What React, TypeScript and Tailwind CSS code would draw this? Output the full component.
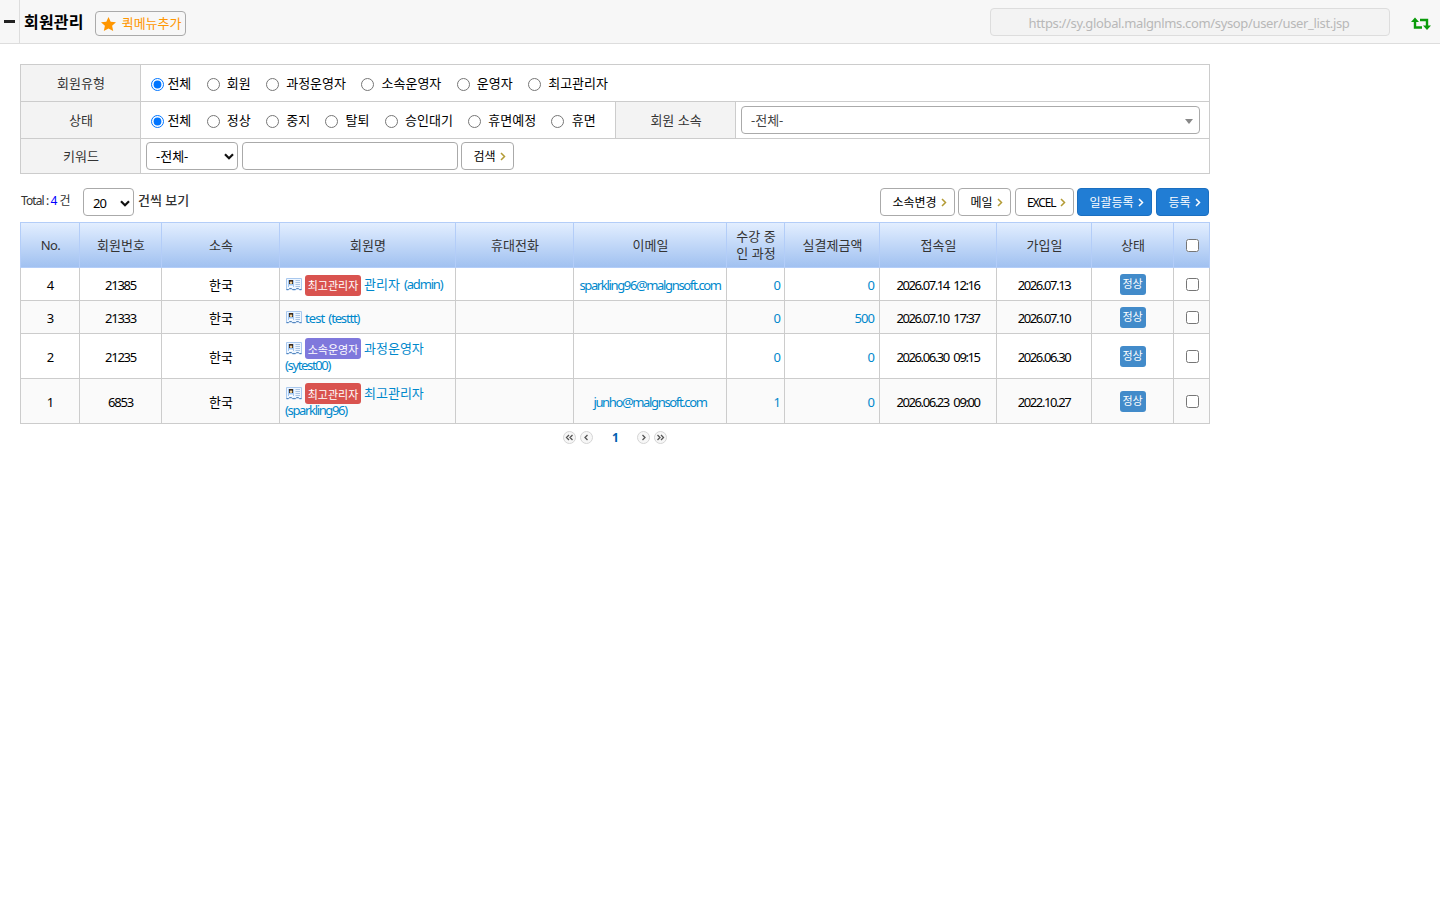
import React from 'react';
import clsx from 'clsx';

const userTypes = ['전체', '회원', '과정운영자', '소속운영자', '운영자', '최고관리자'];
const statuses = ['전체', '정상', '중지', '탈퇴', '승인대기', '휴면예정', '휴면'];

const headers = [
  'No.', '회원번호', '소속', '회원명', '휴대전화', '이메일',
  '수강 중인 과정', '실결제금액', '접속일', '가입일', '상태',
];

interface Member {
  no: number;
  id: string;
  role?: string;
  name: string;
  login: string;
  email: string;
  courses: number;
  paid: number;
  visited: string;
  joined: string;
}

const members: Member[] = [
  { no: 4, id: '21385', role: '최고관리자', name: '관리자', login: 'admin', email: 'sparkling96@malgnsoft.com', courses: 0, paid: 0, visited: '2026.07.14 12:16', joined: '2026.07.13' },
  { no: 3, id: '21333', name: 'test', login: 'testtt', email: '', courses: 0, paid: 500, visited: '2026.07.10 17:37', joined: '2026.07.10' },
  { no: 2, id: '21235', role: '소속운영자', name: '과정운영자', login: 'sytest00', email: '', courses: 0, paid: 0, visited: '2026.06.30 09:15', joined: '2026.06.30' },
  { no: 1, id: '6853', role: '최고관리자', name: '최고관리자', login: 'sparkling96', email: 'junho@malgnsoft.com', courses: 1, paid: 0, visited: '2026.06.23 09:00', joined: '2022.10.27' },
];

const Chevron: React.FC<{ className?: string }> = ({ className }) => (
  <svg className={className} width="6" height="9" viewBox="0 0 6 9" fill="none" stroke="currentColor" strokeWidth="1.5">
    <path d="M1 1l3.5 3.5L1 8" />
  </svg>
);

const SelectArrow: React.FC = () => (
  <svg width="10" height="7" viewBox="0 0 10 7" fill="none" stroke="#111" strokeWidth="2.2">
    <path d="M1 1.2l4 4 4-4" />
  </svg>
);

const CardIcon: React.FC = () => (
  <svg className="inline-block shrink-0" width="16" height="13" viewBox="0 0 16 13">
    <path d="M.5.5h15v11.500h-2l-1-1h-2l-1 1h-3l-1-1h-2l-1 1h-2z" fill="#eef6ff" stroke="#a9c8ee" />
    <path d="M.5 11.500h2l1-1h2l1 1h3l1-1h2l1 1h2" fill="none" stroke="#5587bd" />
    <path d="M2 2h6v7H2z" fill="#9fc6f2" />
    <path d="M3 2h4v4H3z" fill="#3b2a1d" />
    <circle cx="5" cy="4.700" r="1.300" fill="#f8d79c" />
    <path d="M3 9V7.500h4V9z" fill="#fff" />
    <path d="M9.500 2.500H14M9.500 4.500H14M9.500 6.500H14M9.500 8.500H14" stroke="#a9c4e4" />
  </svg>
);

const ActionButton: React.FC<{ label: string; width: string; primary?: boolean; latin?: boolean }> = ({ label, width, primary, latin }) => (
  <button
    className={clsx(
      'flex h-7 items-center justify-between rounded border pt-px pr-[7px] pl-[11px] text-[12px]',
      width,
      primary ? 'border-[#1b6fc0] bg-[#217dd4] text-white' : 'border-[#aaa] bg-white text-black',
    )}
  >
    <span className={latin ? 'tracking-[-1.1px]' : 'pl-[.5px]'}>{label}</span>
    <Chevron className={primary ? 'text-white' : 'text-[#b39b35]'} />
  </button>
);

const RadioGroup: React.FC<{ name: string; options: string[] }> = ({ name, options }) => (
  <div className="flex items-center pl-[10px]">
    {options.map((option, i) => (
      <label key={option} className={clsx('mr-[15.3px] flex items-center', i === 0 ? 'gap-[3.4px]' : 'gap-[7.2px]')}>
        <input type="radio" name={name} defaultChecked={i === 0} className="mt-[2px] h-[13px] w-[13px]" />
        <span className="pt-[2px]">{option}</span>
      </label>
    ))}
  </div>
);

const FilterLabel: React.FC<{ children: React.ReactNode }> = ({ children }) => (
  <div className="flex w-[120px] shrink-0 items-center justify-center border-r border-[#ccc] bg-[#f3f3f3] pt-[2px] pl-px text-[#333]">
    {children}
  </div>
);

const TopBar: React.FC = () => (
  <header className="flex h-11 border-b border-[#ddd] bg-[#f7f7f7]">
    <div className="flex w-5 justify-center border-r border-[#ddd] pt-5">
      <div className="h-[3px] w-[11px] bg-[#222]" />
    </div>
    <h1 className="mt-[10px] ml-[4px] text-[16px] leading-6 font-bold tracking-[.2px]">회원관리</h1>
    <button className="mt-[11px] ml-[11px] flex h-[25px] w-[91px] items-center gap-[6px] rounded border border-[#aaa] pl-[5px] whitespace-nowrap text-[#ff9600]">
      <svg className="shrink-0" width="15" height="14" viewBox="0 0 15 14" fill="#ff9600">
        <path d="M7.500 0l2.200 4.700 5.300.6-3.900 3.500 1.100 5.200-4.700-2.600L2.800 14l1.100-5.200L0 5.300l5.300-.6z" />
      </svg>
      <span>퀵메뉴추가</span>
    </button>
    <div className="mt-2 mr-[21px] ml-auto flex h-7 w-[400px] items-center justify-center rounded border border-[#ddd] bg-[#f3f3f3] pt-[3px] pr-[2px] tracking-[-.35px] text-[#b8b8b8]">
      https://sy.global.malgnlms.com/sysop/user/user_list.jsp
    </div>
    <svg className="mt-[17px] mr-[9px]" width="20" height="14" viewBox="0 0 20 14">
      <path d="M4 4v6.500h7M9 3h7v6" fill="none" stroke="#0a9b0a" strokeWidth="2.400" />
      <path d="M0 5l4-4.500L8 5zM12 8.500h8L16 13z" fill="#0a9b0a" />
    </svg>
  </header>
);

const SearchForm: React.FC = () => (
  <section className="w-[1190px] border border-[#ccc]">
    <div className="flex h-[37px] border-b border-[#ccc]">
      <FilterLabel>회원유형</FilterLabel>
      <RadioGroup name="userType" options={userTypes} />
    </div>
    <div className="flex h-[37px] border-b border-[#ccc]">
      <FilterLabel>상태</FilterLabel>
      <div className="flex w-[475px] shrink-0 border-r border-[#ccc]">
        <RadioGroup name="status" options={statuses} />
      </div>
      <FilterLabel>회원 소속</FilterLabel>
      <div className="flex flex-1 py-1 pr-[9px] pl-[5px]">
        <div className="flex h-7 flex-1 items-center justify-between rounded border border-[#aaa] pt-[2px] pr-[6px] pl-[9px] text-[#444]">
          <span>-전체-</span>
          <svg width="8" height="5" viewBox="0 0 8 5" fill="#888"><path d="M0 0h8L4 5z" /></svg>
        </div>
      </div>
    </div>
    <div className="flex h-[34px]">
      <FilterLabel>키워드</FilterLabel>
      <div className="flex gap-1 pt-[3px] pl-[5px]">
        <div className="flex h-7 w-[92px] items-center justify-between rounded border border-[#aaa] pr-[3px] pl-[9px]">
          <span className="pt-[2px]">-전체-</span>
          <SelectArrow />
        </div>
        <input type="text" className="h-7 w-[216px] rounded border border-[#aaa]" />
        <div className="-ml-px"><ActionButton label="검색" width="w-[53px]" /></div>
      </div>
    </div>
  </section>
);

const MemberTable: React.FC = () => (
  <table className="w-[1190px] table-fixed border-separate border-spacing-0 text-center">
    <colgroup>
      <col className="w-[60px]" />
      <col className="w-[82px]" />
      <col className="w-[118px]" />
      <col className="w-[176px]" />
      <col className="w-[118px]" />
      <col className="w-[153px]" />
      <col className="w-[58px]" />
      <col className="w-[95px]" />
      <col className="w-[117px]" />
      <col className="w-[95px]" />
      <col className="w-[82px]" />
      <col className="w-[36px]" />
    </colgroup>
    <thead>
      <tr className="h-[46px] bg-linear-to-b from-[#e4efff] to-[#9fc0f0] text-[#333]">
        {headers.map((header) => (
          <th key={header} className="border-t border-r border-b border-[#b3cdf8] p-0 pr-[5px] pl-[6px] leading-[17px] font-normal break-all first:border-l first:tracking-[-.5px]">
            {header}
          </th>
        ))}
        <th className="border-t border-r border-b border-[#b3cdf8] p-0 pl-[2px]">
          <input type="checkbox" className="mx-auto block h-[13px] w-[13px]" />
        </th>
      </tr>
    </thead>
    <tbody className="[&_td]:border-r [&_td]:border-b [&_td]:border-[#ccc] [&_td:first-child]:border-l">
      {members.map((m) => (
        <tr key={m.no} className={clsx('even:bg-[#fafafa]', m.no > 2 ? 'h-[33px]' : 'h-[45px]')}>
          <td className="pt-[3px] pl-px">{m.no}</td>
          <td className="pt-[3px] tracking-[-1.2px]">{m.id}</td>
          <td className="pt-[3px] pl-px">한국</td>
          <td className="p-0">
            <div className="pl-[5px] text-left leading-[17px] text-[#0088cc]">
              <div className="flex items-center">
                <span className="mr-1 ml-px flex"><CardIcon /></span>
                {m.role && (
                  <span
                    className={clsx(
                      '-ml-px mr-[3px] flex h-[21px] w-14 items-center justify-center rounded-[3px] pt-px text-[11px] whitespace-nowrap text-white',
                      m.no > 2 && 'relative top-px',
                      m.role === '최고관리자' ? 'bg-[#d9534f]' : 'bg-[#7f78dc]',
                    )}
                  >
                    {m.role}
                  </span>
                )}
                <span className={m.role ? '' : '-ml-px pt-[2px] tracking-[-.9px]'}>{m.name}</span>
                {m.no > 2 && <span className={clsx('ml-1 tracking-[-1.15px]', m.role ? 'pt-px' : 'pt-[2px]')}>({m.login})</span>}
              </div>
              {m.no <= 2 && <div className="-mt-[2px] tracking-[-1.35px]">({m.login})</div>}
            </div>
          </td>
          <td className="p-0" />
          <td className="p-0 pt-[3px] tracking-[-1.35px] text-[#0088cc]">{m.email}</td>
          <td className="p-0 pt-[3px] text-[#0088cc]"><div className="pr-[3px] text-right">{m.courses}</div></td>
          <td className="p-0 pt-[3px] text-[#0088cc]"><div className="pr-[5px] text-right tracking-[-.9px]">{m.paid}</div></td>
          <td className="p-0 pt-[3px] tracking-[-1.4px] [word-spacing:2.5px]">{m.visited}</td>
          <td className="p-0 pt-[3px] tracking-[-1.4px]">{m.joined}</td>
          <td className="p-0">
            <span className="mx-auto flex h-[21px] w-[26px] items-center justify-center rounded-[3px] bg-[#428bca] pt-px text-[11px] text-white">정상</span>
          </td>
          <td className="p-0 pl-[2px]"><input type="checkbox" className="mx-auto block h-[13px] w-[13px]" /></td>
        </tr>
      ))}
    </tbody>
  </table>
);

const PageButton: React.FC<{ back?: boolean; double?: boolean }> = ({ back, double }) => (
  <svg className={back ? 'rotate-180' : ''} width="13" height="13" viewBox="0 0 13 13" fill="none">
    <circle cx="6.500" cy="6.500" r="6" fill="#f7f7f7" stroke="#d4d4d4" />
    <path d={double ? 'M3.500 4l2.500 2.500L3.500 9M7 4l2.500 2.500L7 9' : 'M5.500 4L8 6.500 5.500 9'} stroke="#555" strokeWidth="1.300" />
  </svg>
);

const App: React.FC = () => {
  return (
    <div className="h-[900px] w-full overflow-hidden bg-white font-['Noto_Sans','Noto_Sans_CJK_KR',sans-serif] text-[13px] text-black">
      <TopBar />
      <main className="ml-5 w-[1190px] pt-5">
        <SearchForm />
        <div className="flex h-12 items-start pt-[14px]">
          <div className="mt-[3px] ml-px w-[62px] text-[12px] leading-5 whitespace-nowrap text-[#333]">
            <span className="tracking-[-.9px]">Total : <span className="text-[#0000ff]">4</span></span> 건
          </div>
          <div className="flex h-7 w-[51px] items-center justify-between rounded border border-[#aaa] pt-[2px] pr-[3px] pl-[9px]">
            <span className="pt-px tracking-[-1px]">20</span>
            <SelectArrow />
          </div>
          <span className="mt-[2px] ml-1 leading-5 font-medium text-[#333]">건씩 보기</span>
          <div className="mr-px ml-auto flex gap-[3px]">
            <ActionButton label="소속변경" width="w-[75px]" />
            <ActionButton label="메일" width="w-[53px]" />
            <div className="ml-px"><ActionButton label="EXCEL" width="w-[59px]" latin /></div>
            <ActionButton label="일괄등록" width="w-[75px]" primary />
            <div className="ml-px"><ActionButton label="등록" width="w-[53px]" primary /></div>
          </div>
        </div>
        <MemberTable />
        <nav className="-mt-px flex h-7 items-center justify-center gap-1">
          <PageButton back double />
          <PageButton back />
          <span className="mx-[14px] pt-[2px] pl-px text-[12px] font-bold text-[#0060b0]">1</span>
          <PageButton />
          <PageButton double />
        </nav>
      </main>
    </div>
  );
};

export default App;
